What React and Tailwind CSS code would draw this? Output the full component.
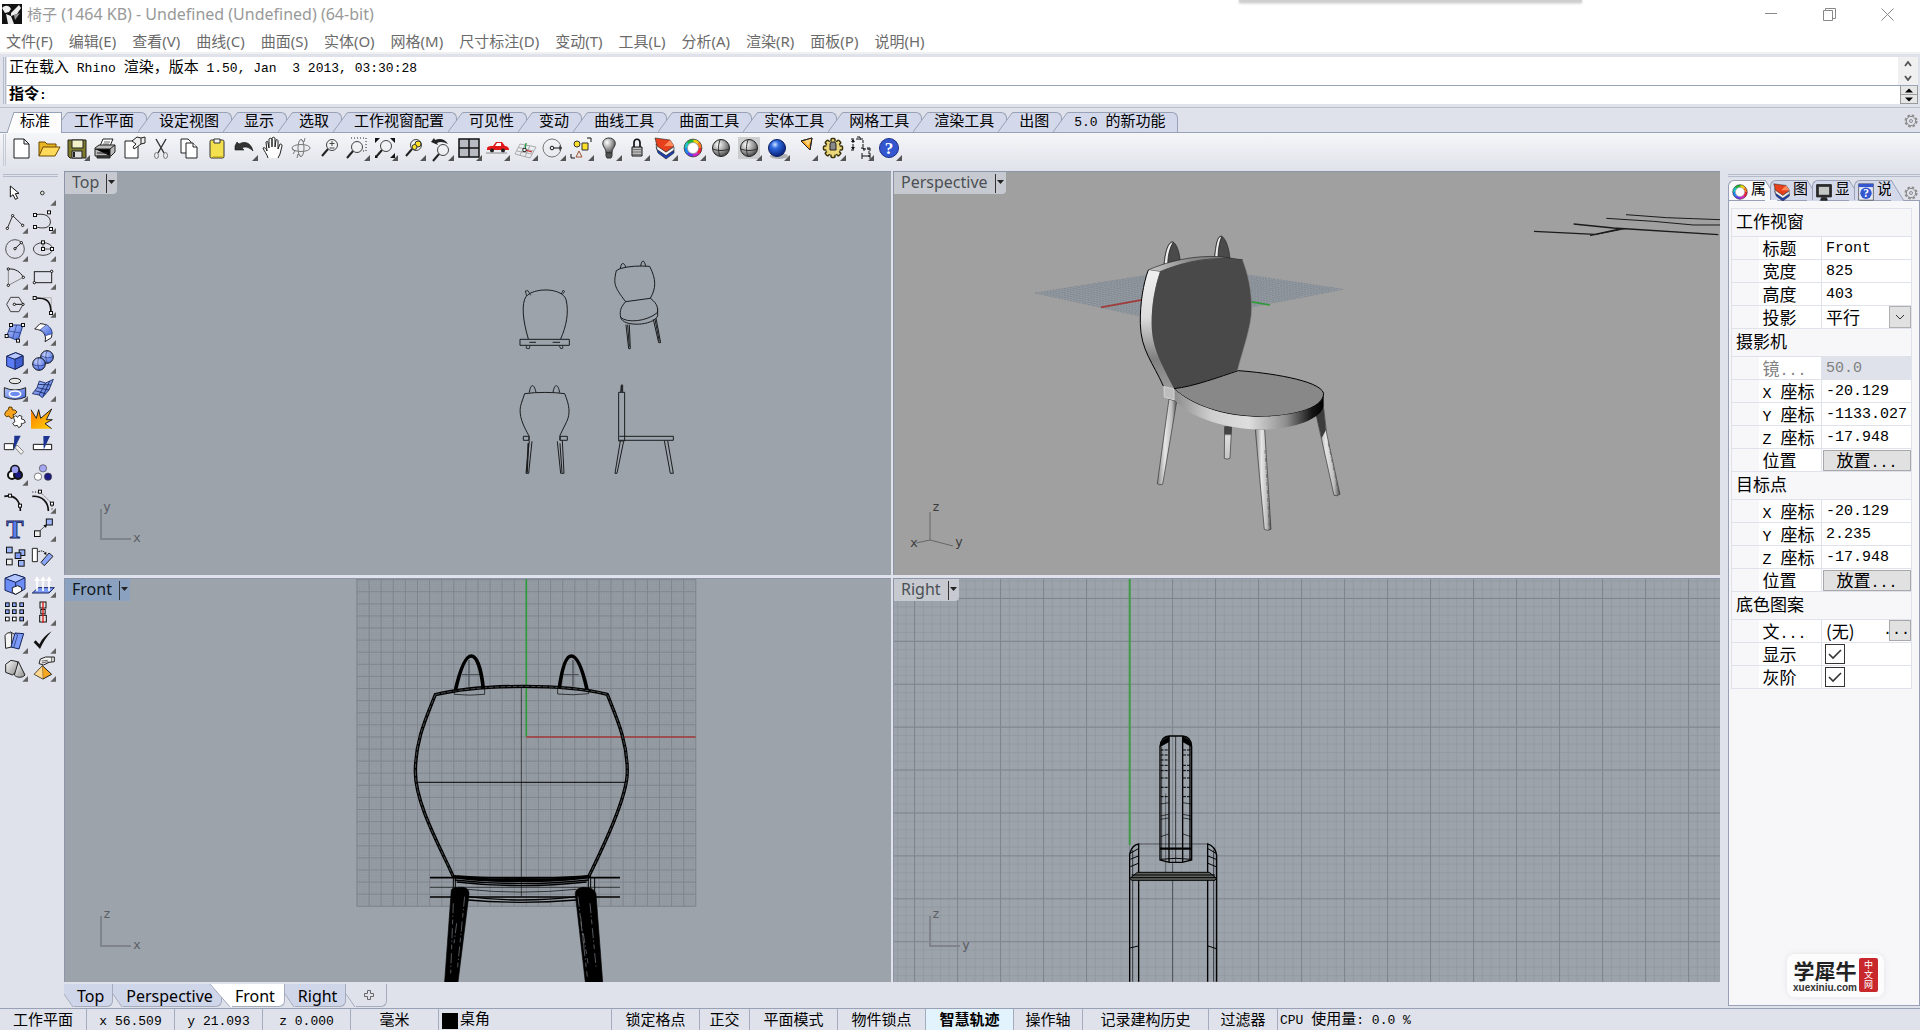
import React from "react";

const INK = "#1c1c1c";

/* ---------- text helpers ---------- */

function Mixed({ text, big }) {
  const parts = text.split(/([\x20-\x7e]+)/).filter(Boolean);
  return (
    <>
      {parts.map((p, i) =>
        /^[\x20-\x7e]+$/.test(p) ? (
          <span
            key={i}
            className={
              big
                ? "whitespace-pre font-['Liberation_Mono',monospace] text-[15px] leading-none"
                : "whitespace-pre font-['Liberation_Mono',monospace] text-[13px] leading-none"
            }
          >
            {p}
          </span>
        ) : (
          <span key={i}>{p}</span>
        )
      )}
    </>
  );
}

function Gear({ className }) {
  return (
    <svg className={className} width="14" height="14" viewBox="0 0 14 14" fill="none" stroke="#8c8c8c">
      <circle cx="7" cy="7" r="5.6" strokeWidth="1.8" strokeDasharray="2.6 1.8" />
      <circle cx="7" cy="7" r="4.6" strokeWidth="1" />
      <circle cx="7" cy="7" r="1.5" strokeWidth="1" />
    </svg>
  );
}

function SharedDefs() {
  return (
    <svg className="absolute h-0 w-0" aria-hidden="true">
      <defs>
        <linearGradient id="blue" x1="0" y1="0" x2="1" y2="1">
          <stop offset="0" stopColor="#b4c4fa" />
          <stop offset="1" stopColor="#4468dc" />
        </linearGradient>
        <linearGradient id="grey" x1="0" y1="0" x2="1" y2="1">
          <stop offset="0" stopColor="#ffffff" />
          <stop offset="1" stopColor="#8a8a8a" />
        </linearGradient>
        <linearGradient id="orange" x1="0" y1="0" x2="1" y2="1">
          <stop offset="0" stopColor="#ff7a00" />
          <stop offset="1" stopColor="#ffd200" />
        </linearGradient>
        <radialGradient id="ballBlue" cx="0.38" cy="0.3" r="0.75">
          <stop offset="0" stopColor="#cfe4ff" />
          <stop offset="0.3" stopColor="#2f6be0" />
          <stop offset="1" stopColor="#041a70" />
        </radialGradient>
        <radialGradient id="ballSoft" cx="0.38" cy="0.3" r="0.75">
          <stop offset="0" stopColor="#c8d4ff" />
          <stop offset="1" stopColor="#4468dc" />
        </radialGradient>
        <radialGradient id="ballGrey" cx="0.35" cy="0.3" r="0.8">
          <stop offset="0" stopColor="#ffffff" />
          <stop offset="0.6" stopColor="#8c8c8c" />
          <stop offset="1" stopColor="#333333" />
        </radialGradient>
      </defs>
    </svg>
  );
}

function ColorWheel({ cx, cy, r }) {
  const cols = ["#f3d400", "#ff7a1a", "#f01f3c", "#d426c8", "#5a3cf0", "#1e86f0", "#16c8c8", "#1fb83a"];
  return (
    <g fill="none" strokeWidth={r * 0.42}>
      {cols.map((c, i) => {
        const a = (i * Math.PI) / 4 - Math.PI / 2;
        const b = a + Math.PI / 4 + 0.06;
        return (
          <path
            key={c}
            stroke={c}
            d={`M${cx + r * Math.cos(a)} ${cy + r * Math.sin(a)}A${r} ${r} 0 0 1 ${cx + r * Math.cos(b)} ${cy + r * Math.sin(b)}`}
          />
        );
      })}
      <circle cx={cx} cy={cy} r={r * 1.22} stroke="#222" strokeWidth="0.7" />
      <circle cx={cx} cy={cy} r={r * 0.76} stroke="#555" strokeWidth="0.5" fill="#fff" />
    </g>
  );
}

const LayersShape = (
  <g stroke="#222" strokeWidth="0.6" strokeLinejoin="round">
    <path d="M5 13L15 21L23 16V19L15 25L7 19Z" fill="#1d3fae" />
    <path d="M5 10L15 18L23 13V16L15 21.500L6 15.500Z" fill="#f4f4f4" />
    <path d="M4 4L19 6L23 12L15 18L6 12Z" fill="#e8401c" />
    <path d="M19 6L13 12L23 12Z" fill="#ff8a5c" stroke="none" />
  </g>
);

/* ---------- standard toolbar icons, 28 x 28 ---------- */

const Glass = ({ x = 17, y = 11 }) => (
  <g>
    <circle cx={x} cy={y} r="5.5" fill="#f4f4f4" fillOpacity="0.5" stroke="#444" />
    <path d={`M${x - 4} ${y + 4}L${x - 10} ${y + 11}`} stroke="#222" strokeWidth="2" />
  </g>
);

const Tooth = ({ a }) => <rect x="12" y="4.500" width="4" height="19" rx="1" transform={`rotate(${a} 14 14)`} />;

const BAR = [
  ["新建", <path d="M7 5h10l5 5v14H7z M17 5v5h5" fill="#fff" stroke={INK} />],
  ["打开", <g stroke="#6b4a00"><path d="M4 22V8h6l2 2h9v4" fill="#e8b422" /><path d="M4 22l4-9h17l-5 9z" fill="#ffd95a" /></g>],
  ["保存", <g stroke="#222"><path d="M5 6h18v18H7l-2-2z" fill="#7d7a2c" /><path d="M9 6h11v8H9z" fill="#f4f1c8" /><path d="M9 17h10v7H9z" fill="#ddd" /><path d="M11 18v5" strokeWidth="2" /></g>, 1],
  ["打印", <g stroke="#222"><path d="M9 12l3-7h10l-3 7z" fill="#fff" /><path d="M13 8h6M12 10h6" strokeWidth="0.7" /><path d="M4 14l4-3h16v7l-4 4H4z" fill="#bbb" /><path d="M4 15h15v7M19 15l5-4M6 19h11" /><path d="M6 22h13v2H6z" fill="#444" /></g>],
  ["文件属性", <g stroke="#222"><path d="M6 7h13v17H6z" fill="#fff" /><path d="M13 7l5-4 4 1 4-1v6l-4 1-4 3-3 2-1-2 3-3z" fill="#eee" /><path d="M22 4v6" /></g>],
  ["剪切", <g fill="none" stroke="#333"><path d="M9 5l8 14M19 5l-8 14" strokeWidth="1.4" /><ellipse cx="9.500" cy="21.500" rx="2" ry="3" stroke="#777" /><ellipse cx="18.500" cy="21.500" rx="2" ry="3" stroke="#777" /></g>],
  ["复制", <g fill="#fff" stroke="#222"><path d="M6 5h7l3 3v11H6z" /><path d="M11 9h7l4 4v11H11z" /><path d="M18 9v4h4" /></g>],
  ["粘贴", <g stroke="#333"><rect x="7" y="6" width="14" height="18" rx="1.500" fill="#f3e04e" /><path d="M11 5h6v4h-6z" fill="#f4f4f4" /><path d="M10 23h10" stroke="#b09a10" /></g>],
  ["撤销", <path d="M4 12l2-4 2 2c5-3 12-2 14 7-4-4-8-5-11-3l2 2-9 0z" fill="#333" stroke="#111" strokeWidth="0.6" />, 1],
  ["平移", <path d="M9 24c-1-4-4-7-5-10 1-1 3 0 4 3l-1-9c1-1 2-1 2 1l1 5V5c1-1 2-1 3 0v8V4c1-1 2-1 3 0v9l1-7c1-1 2 0 2 1v8l2-5c1 0 2 0 2 2l-2 8-2 4" fill="#fff" stroke="#222" />],
  ["旋转视图", <g fill="none" stroke="#777"><ellipse cx="14" cy="14" rx="9" ry="3.500" /><ellipse cx="14" cy="14" rx="3" ry="8.500" /><path d="M17 8l-3-3M17 8l1-4M8 17l-3-2M8 17l-2 3M11 20l3 3M11 20l-1 4" /></g>],
  ["动态缩放", <g><Glass /><path d="M14.500 9.500h5M17 7v5M14.500 14h5" stroke="#444" fill="none" /></g>],
  ["框选缩放", <g><path d="M8 4h15v13h-4" fill="none" stroke="#222" strokeDasharray="1 2" /><Glass x={14} y={13} /></g>, 1],
  ["缩放至范围", <g><Glass x={15} y={12} /><path d="M4 4h5L4 9zM24 4v5l-5-5zM24 24h-5l5-5zM4 24v-3l3 3z" fill="#111" /></g>, 1],
  ["缩放选取物件", <g><Glass /><circle cx="19" cy="10" r="3" fill="#ffe12a" stroke="#333" /><circle cx="15.500" cy="13" r="2.500" fill="#ffe12a" stroke="#333" /></g>, 1],
  ["复原视图", <g><Glass x={16} y={16} /><path d="M4 8l3-4 1 2c5-2 10-1 13 4-4-2-8-3-11-1l1 2z" fill="#222" /></g>, 1],
  ["四个作业视窗", <path d="M4 5h20v18H4zM14 5v18M4 14h20" fill="#b8bcc2" stroke="#111" strokeWidth="1.500" />, 1],
  ["车", <g><path d="M4 15c0-3 3-3 6-3l3-4h6l3 4c2 0 4 1 4 4H4z" fill="#e01818" /><path d="M12 12l2-3h4v3z" fill="#fff" /><circle cx="9" cy="16.500" r="2" fill="#222" /><circle cx="20" cy="16.500" r="2" fill="#222" /><path d="M3 19h21" stroke="#888" /></g>, 1],
  ["设定工作平面", <g fill="none" stroke="#999" strokeWidth="0.8"><path d="M4 20l5-10 16 3-6 11zM6 17l15 3M7.500 13.500l15 3.500M9 21l5-10M14 22.500l5-11" /><path d="M14 16l1-7" stroke="#1a9a3a" strokeWidth="1.300" /><path d="M14 16l7 2" stroke="#d02020" strokeWidth="1.300" /><path d="M12 14.500h3v3h-3z" fill="#fff" stroke="#111" /></g>, 1],
  ["圆", <g fill="none" stroke="#777"><circle cx="13" cy="14" r="9" /><circle cx="13" cy="14" r="1.800" stroke="#111" /><path d="M15 14h8" stroke="#111" /><path d="M21 11.500v5" stroke="#111" /></g>, 1],
  ["物件捕捉", <g stroke="#333"><circle cx="10" cy="10" r="3" fill="#ffe12a" /><path d="M15 9h6v7h-6z" fill="#ffe12a" /><path d="M12 17l-3 6h6z" fill="none" stroke="#a0522d" /><path d="M20 4h4v4M4 20v4h4" fill="none" stroke="#111" /></g>, 1],
  ["灯光", <g stroke="#333"><path d="M14 4c-5 0-7 4-6 7 1 3 3 4 3 8h6c0-4 2-5 3-8 1-3-1-7-6-7z" fill="url(#ballGrey)" /><path d="M11 19h6v3l-1 2h-4l-1-2z" fill="#555" /></g>, 1],
  ["锁定", <g stroke="#111"><path d="M11 13V9c0-5 6-5 6 0v4" fill="none" strokeWidth="1.700" /><path d="M9 13h10v9H9z" fill="#bbb" /><path d="M10 15.500h8M10 18h8M10 20.500h8" stroke="#777" /></g>, 1],
  ["图层", LayersShape, 1],
  ["物件属性", <ColorWheel cx={14} cy={14} r={7.3} />, 1],
  ["着色模式", <g><circle cx="14" cy="14" r="8.500" fill="url(#ballGrey)" stroke="#222" /><path d="M6 15c5 2 11 2 16 0M13 6c-2 5-2 12 0 16" fill="none" stroke="#333" /></g>],
  ["着色全部", <g><rect x="3" y="3" width="22" height="22" fill="#b8b8b8" opacity="0.6" /><circle cx="14" cy="14" r="8.500" fill="url(#ballGrey)" stroke="#222" /><path d="M6 15c5 2 11 2 16 0M13 6c-2 5-2 12 0 16" fill="none" stroke="#333" /></g>, 1],
  ["渲染", <g><ellipse cx="16" cy="22" rx="9" ry="3" fill="#999" opacity="0.7" /><circle cx="14" cy="14" r="8.500" fill="url(#ballBlue)" stroke="#0a1c60" /></g>, 1],
  ["聚光灯", <g stroke="#222"><path d="M10 7l11-3-2 12z" fill="#f7a521" /><path d="M13 7l8-3-4 8z" fill="#ffd27a" stroke="none" /><path d="M10 7l11-3-2 12z" fill="none" /></g>, 1],
  ["选项", <g><g fill="#ecd87a" stroke="#3a3208" strokeWidth="1.500"><Tooth a={0} /><Tooth a={45} /><Tooth a={90} /><Tooth a={135} /></g><circle cx="14" cy="14" r="7" fill="#ecd87a" /><path d="M12 8h4l1 2v6h-6v-6z" fill="#888" stroke="#222" /></g>, 1],
  ["尺寸标注", <g fill="none" stroke="#111"><path d="M4 5h4M4 16h4M6 6v9M9 5h7v10M16 15h6v8" strokeDasharray="3 1" /><path d="M6 5l-2 3h4zM6 16l-2-3h4z" fill="#111" stroke="none" /><path d="M10 3h3v3M14 14h3v3M20 14h3v3" /><path d="M15 22h8M15 19v6M23 19v6" /></g>, 1],
  ["说明", <g><circle cx="14" cy="14" r="9.500" fill="#3457d0" stroke="#1c2f86" /><text x="14" y="20" textAnchor="middle" fill="#fff" fontFamily="Liberation Serif, serif" fontWeight="bold" fontSize="17">?</text></g>, 1],
];

/* ---------- side tool icons, 84 x 84 ---------- */

const Sq = ({ x, y, s = 9, f = "#fff" }) => (
  <rect x={x - s / 2} y={y - s / 2} width={s} height={s} fill={f} stroke="#111" strokeWidth="3" />
);
const Dot = ({ x, y }) => <circle cx={x} cy={y} r="3.5" fill="#fff" stroke="#111" strokeWidth="3" />;

const SIDE = [
  ["选取", <path d="M28 21V54L36 47L43 61L50 58L43 44L54 43Z" fill="#fff" stroke="#111" strokeWidth="3" />, 0],
  ["单点", <circle cx="40" cy="42" r="5.5" fill="#dfe8d8" stroke="#333" strokeWidth="3" />, 1],
  ["多重直线", <g><path d="M19 64L35 26L65 55" fill="none" stroke="#333" strokeWidth="3" /><Dot x={19} y={64} /><Dot x={35} y={26} /><Dot x={65} y={55} /></g>, 1],
  ["控制点曲线", <g><path d="M18 24C50 16 66 30 64 48C60 66 40 64 18 60" fill="none" stroke="#333" strokeWidth="3" /><Sq x={18} y={24} /><Sq x={60} y={16} /><Sq x={18} y={60} /><Sq x={66} y={66} /></g>, 1],
  ["圆", <g><circle cx="42" cy="42" r="28" fill="none" stroke="#555" strokeWidth="3" /><path d="M42 41L61 23" stroke="#111" strokeWidth="3" /><Dot x={42} y={41} /><Dot x={61} y={23} /></g>, 1],
  ["椭圆", <g><ellipse cx="42" cy="42" rx="29" ry="19" fill="none" stroke="#444" strokeWidth="3" /><path d="M42 22V42H69" fill="none" stroke="#111" strokeWidth="2" /><Sq x={42} y={22} /><Sq x={42} y={42} /><Sq x={69} y={42} /></g>, 1],
  ["圆弧", <g fill="none" strokeWidth="3"><path d="M22 18V67L67 43" stroke="#888" /><path d="M22 18C42 16 58 26 67 43" stroke="#222" /><Dot x={22} y={18} /><Dot x={67} y={43} /><Dot x={22} y={67} /></g>, 1],
  ["矩形", <g><rect x="16" y="26" width="52" height="33" fill="none" stroke="#222" strokeWidth="3" /><Dot x={68} y={25} /><Dot x={16} y={59} /></g>, 1],
  ["多边形", <g><path d="M17 40L29 19H54L66 40L54 62H29Z" fill="none" stroke="#444" strokeWidth="3" /><path d="M40 40H65" stroke="#111" strokeWidth="3" /><Dot x={40} y={40} /><Dot x={66} y={40} /></g>, 1],
  ["曲线圆角", <g fill="none"><path d="M40 20H67V50" stroke="#999" strokeWidth="2" /><path d="M17 21C52 20 66 28 66 66" stroke="#111" strokeWidth="5" /><Sq x={17} y={21} /><Sq x={66} y={66} /></g>, 1],
  ["角点曲面", <g><path d="M30 18H66L51 65L17 51Z" fill="url(#blue)" stroke="#223a88" strokeWidth="3" /><path d="M47 18L35 58M24 36L59 42" stroke="#223a88" strokeWidth="2" /><Sq x={30} y={18} /><Sq x={66} y={18} /><Sq x={51} y={65} /><Sq x={17} y={51} /></g>, 1],
  ["放样曲面", <g stroke="#222" strokeWidth="3"><path d="M17 30L33 14C60 14 74 34 67 56L48 68C54 48 42 32 17 30Z" fill="#fff" /><path d="M33 33L53 17C64 24 70 34 69 44L49 50C48 42 42 36 33 33Z" fill="url(#blue)" stroke="#223a88" strokeWidth="2" /></g>, 1],
  ["立方体", <g stroke="#16245c" strokeWidth="3" strokeLinejoin="round"><path d="M17 28L44 17L66 26V55L42 67L17 57Z" fill="#5a7cf4" /><path d="M17 28L44 17L66 26L42 37Z" fill="#b8c8ff" /><path d="M42 37L66 26V55L42 67Z" fill="#3f5fd0" /></g>, 1],
  ["布尔运算联集", <g stroke="#111" strokeWidth="3"><circle cx="54" cy="30" r="19" fill="url(#ballSoft)" /><circle cx="30" cy="51" r="19" fill="url(#ballSoft)" /><path d="M36 26C50 34 62 34 73 28M55 11C48 24 50 38 56 49M12 52C24 58 36 58 48 52M30 32C24 44 26 58 32 70" fill="none" stroke="#1c2f76" strokeWidth="2" /></g>, 1],
  ["投影曲线", <g stroke="#222" strokeWidth="3"><ellipse cx="42" cy="18" rx="17" ry="8" fill="#e8e8e8" /><path d="M10 38Q42 52 74 38V66Q42 80 10 66Z" fill="url(#blue)" /><ellipse cx="42" cy="57" rx="17" ry="9" fill="#6d8cf0" stroke="#fff" strokeWidth="5" /></g>, 1],
  ["网格", <g stroke="#16245c" strokeWidth="2.5"><path d="M31 18L50 24L73 13L60 45L40 68L30 60L10 56L24 38Z" fill="url(#blue)" /><path d="M24 38L60 45M18 47L50 56M50 24L30 60M62 18L42 64M27 28L66 30" fill="none" /></g>, 1],
  ["组合", <g strokeWidth="3"><path d="M14 26l8-6 2-8 9 1 1 8 8 0 6 6-6 6-6 2 2 8-8 4-6-8-8 2-5-6z" fill="#f7a521" stroke="#5c3a00" /><path d="M38 44l6-6 6 5 4-6 9 3-2 8 8 2 4 8-8 4-4-1 0 8-8 5-4-7-8 2-6-8 7-5z" fill="#fff" stroke="#333" /></g>, 0],
  ["炸开", <g><path d="M6 20L22 46L29 20L35 46L68 18L52 50H70L48 62L68 77H6Z" fill="url(#orange)" /><path d="M6 20L22 46L29 20L35 46L68 18L52 50H70L48 62L68 77" fill="none" stroke="#222" strokeWidth="3" /></g>, 0],
  ["修剪", <g stroke="#222" strokeWidth="3"><path d="M10 38H38V56H10Z" fill="#fff" /><path d="M42 50L48 42L68 62L60 70Z" fill="#eee" stroke="#888" /><path d="M40 14H59L38 58Z" fill="#1d3590" stroke="none" /></g>, 0],
  ["分割", <g stroke="#111" strokeWidth="3"><path d="M13 40H68V56H13Z" fill="#fff" /><path d="M43 15H63L44 56Z" fill="#1d3590" stroke="none" /></g>, 0],
  ["群组", <g stroke="#111" strokeWidth="6"><circle cx="42" cy="32" r="12" fill="#9a9cf0" /><circle cx="33" cy="48" r="12" fill="#fff" /><circle cx="51" cy="48" r="12" fill="#1c1a80" /><circle cx="42" cy="32" r="10" fill="#9a9cf0" stroke="none" /></g>, 1],
  ["解散群组", <g stroke="#444" strokeWidth="2"><circle cx="42" cy="28" r="11" fill="#a4a6f2" /><circle cx="27" cy="53" r="11" fill="#fff" /><circle cx="57" cy="53" r="11" fill="#1c1a80" /></g>, 0],
  ["编辑点", <g><path d="M10 28C40 22 58 40 58 72" fill="none" stroke="#111" strokeWidth="5" /><Sq x={27} y={26} /><Sq x={57} y={56} /></g>, 0],
  ["控制点", <g><path d="M10 28C40 26 58 46 58 72" fill="none" stroke="#111" strokeWidth="5" /><path d="M10 15H34L69 50V72" fill="none" stroke="#111" strokeWidth="3" strokeDasharray="3 5" /><Sq x={33} y={14} /><Sq x={69} y={50} /></g>, 1],
  ["文字", <text x="42" y="68" textAnchor="middle" fontFamily="Liberation Serif, serif" fontWeight="bold" fontSize="78" fill="#5c80ea" stroke="#16245c" strokeWidth="2.500">T</text>, 0],
  ["移动", <g><path d="M34 46L52 30" stroke="#111" strokeWidth="3" strokeDasharray="5 3" /><path d="M54 28L43 31L51 39Z" fill="#111" /><Sq x={25} y={56} s={17} f="#eee" /><Sq x={61} y={21} s={18} f="#9cb4fa" /></g>, 1],
  ["复制", <g><Sq x={25} y={21} s={17} f="#9cb4fa" /><Sq x={63} y={29} s={17} f="#9cb4fa" /><Sq x={51} y={38} s={17} f="#7c9af4" /><Sq x={25} y={57} s={17} f="#eee" /><Sq x={61} y={61} s={17} f="#9cb4fa" /></g>, 0],
  ["旋转", <g stroke="#222" strokeWidth="3"><path d="M10 16H25V56H10Z" fill="#fff" /><path d="M28 26C38 22 46 24 50 32" fill="none" strokeDasharray="5 2" /><path d="M52 36l-8-4 8-6z" fill="#111" stroke="none" /><path d="M36 58L60 30L72 40L46 68Z" fill="#8aa6f8" /></g>, 0],
  ["实体编辑", <g stroke="#16245c" strokeWidth="3" strokeLinejoin="round"><path d="M12 22L42 10L72 20V54L44 70L12 58Z" fill="#6c8cf6" /><path d="M12 22L42 10L72 20L44 34Z" fill="#b4c6ff" /><path d="M34 50L50 44L62 50V60L44 70L34 64Z" fill="#fff" stroke="#222" /><path d="M44 34V48" /></g>, 1],
  ["挤出", <g><path d="M10 66L28 50H76L60 66Z" fill="#7c9af8" stroke="#16245c" strokeWidth="3" /><path d="M24 60V26M42 60V26M60 60V26" stroke="#fff" strokeWidth="5" /><path d="M15 30L24 16L33 30ZM33 30L42 16L51 30ZM51 30L60 16L69 30Z" fill="#fff" /></g>, 1],
  ["矩形阵列", <g>{[17, 38, 60].map((y) => [19, 40, 62].map((x) => <Sq key={x + "-" + y} x={x} y={y} s={11} f={y > 50 && x < 50 ? "#fff" : "#8aa6f8"} />))}</g>, 1],
  ["对齐", <g><Sq x={42} y={18} s={18} f="#e4e4e4" /><Sq x={42} y={38} s={13} f="#e4e4e4" /><Sq x={42} y={59} s={20} f="#e4e4e4" /><path d="M42 8V72" stroke="#e01818" strokeWidth="5" strokeOpacity="0.8" /></g>, 1],
  ["分析", <g stroke="#222" strokeWidth="3"><path d="M12 26C16 18 26 14 32 20V60L14 64Z" fill="#f4f4f4" /><path d="M28 14L40 22" /><path d="M42 18L68 20L54 66L30 60Z" fill="#7c9af8" stroke="#16245c" /><path d="M42 18L50 24L38 62" fill="none" stroke="#16245c" strokeWidth="2" /></g>, 1],
  ["检查", <path d="M14 46L20 40L31 52C40 34 52 22 68 13C52 30 42 46 33 66Z" fill="#111" />, 1],
  ["可见性", <g stroke="#222" strokeWidth="3"><path d="M14 28L30 16L50 20V48L34 60L14 52Z" fill="url(#grey)" /><path d="M52 20L72 60C64 70 46 68 40 60Z" fill="url(#grey)" /></g>, 1],
  ["着色", <g stroke="#222" strokeWidth="3"><path d="M40 32L68 58L42 72L16 58Z" fill="#f5a623" /><path d="M40 32L42 72L16 58Z" fill="#ffd890" strokeWidth="1" /><path d="M34 12L50 6H76V20L60 22L44 30L30 26Z" fill="#eee" /><path d="M38 18L56 16M38 24L58 20M68 6V20" strokeWidth="2" /></g>, 1],
];

/* ---------- viewport drawings ---------- */

const range = (n) => Array.from({ length: n }, (_, i) => i);

function AxisMark({ x, y, up, side }) {
  return (
    <g fontFamily="DejaVu Sans Mono, monospace" fontSize="13" fill="#5a5e64">
      <path d={`M${x} ${y - 30}V${y}H${x + 30}`} fill="none" stroke="#80838a" strokeWidth="2" />
      <text x={x + 2} y={y - 28}>{up}</text>
      <text x={x + 32} y={y + 3}>{side}</text>
    </g>
  );
}

function TopScene() {
  return (
    <g transform="translate(-65 -172)">
      <AxisMark x={101} y={539} up="y" side="x" />
      <g transform="translate(480 230) scale(.3333)" fill="none" stroke="#1a1c1e" strokeWidth="3">
        <path d="M145 327C128 270 124 220 138 200C160 172 245 172 258 208C268 250 258 290 242 327" />
        <path d="M120 328H268V346H120ZM148 337H168M218 337H240" />
        <path d="M140 198L136 183L144 182L152 196M244 192L249 181L254 184L248 192M139 347V355L148 356L150 347M238 347L242 356L248 355V347" strokeWidth="2.500" />
        <path d="M420 116L409 122C400 160 402 170 437 215L511 205C528 175 530 150 509 109C480 107 445 108 420 116" />
        <path d="M421 115C424 98 430 94 438 112M482 108C486 88 492 88 497 108" />
        <path d="M437 215C418 235 420 250 422 262C440 280 500 275 532 248C536 228 525 215 511 205M422 262C428 292 520 288 533 258V236" />
        <path d="M438 284L446 356H451L448 284M443 284L448 350M520 268L536 338H542L528 264M525 268L538 334" />
        <path d="M146 616C120 570 116 545 124 520L134 491C170 486 220 486 254 491C268 525 272 550 260 575L240 616" />
        <path d="M148 488C152 460 162 460 168 487M219 487C224 460 234 460 239 488" />
        <path d="M130 619H147V631H130ZM240 619H262V631H240ZM240 616V631M147 616V631" />
        <path d="M148 632L138 730H146L156 634" /><path d="M145 640L141 728" strokeWidth="5" />
        <path d="M232 634L242 730H252L247 632M240 640L246 728" strokeWidth="3" />
        <path d="M416 487H434V633H416ZM422 487L424 465H428V487M425 468V485" />
        <path d="M418 619H580V631H418" />
        <path d="M421 633L405 730H411L431 634M553 632L571 730H580L563 632" />
      </g>
    </g>
  );
}

function lerp(a, b, t) {
  return [a[0] + (b[0] - a[0]) * t, a[1] + (b[1] - a[1]) * t];
}

function PerspectiveScene() {
  const L = [45, 219], T = [531, 142], R = [970, 208], B = [452, 308];
  const lines = range(29).flatMap((i) => {
    const t = i / 28;
    return [[lerp(L, T, t), lerp(B, R, t)], [lerp(L, B, t), lerp(T, R, t)]];
  });
  return (
    <g transform="translate(-894 -172)">
      <defs>
        <linearGradient id="side" x1="0" y1="0" x2="0" y2="1">
          <stop offset="0" stopColor="#f0f0f0" /><stop offset="0.4" stopColor="#dcdcdc" /><stop offset="0.75" stopColor="#808080" /><stop offset="1" stopColor="#9a9a9a" />
        </linearGradient>
        <linearGradient id="seat" x1="0" y1="0" x2="1" y2="0">
          <stop offset="0" stopColor="#8c8c8c" /><stop offset="0.25" stopColor="#cfcfcf" /><stop offset="0.5" stopColor="#dedede" /><stop offset="0.75" stopColor="#8e8e8e" /><stop offset="0.92" stopColor="#151515" /><stop offset="1" stopColor="#000" />
        </linearGradient>
        <linearGradient id="leg" x1="0" y1="0" x2="1" y2="0">
          <stop offset="0" stopColor="#8a8a8a" /><stop offset="0.4" stopColor="#e6e6e6" /><stop offset="0.75" stopColor="#bdbdbd" /><stop offset="1" stopColor="#555" />
        </linearGradient>
        <linearGradient id="rim" x1="0" y1="0" x2="1" y2="0">
          <stop offset="0" stopColor="#c8c8c8" /><stop offset="0.45" stopColor="#8a8a8a" /><stop offset="1" stopColor="#707070" />
        </linearGradient>
        <linearGradient id="legDark" x1="0" y1="0" x2="0" y2="1">
          <stop offset="0" stopColor="#444" /><stop offset="0.22" stopColor="#444" /><stop offset="0.28" stopColor="#dcdcdc" /><stop offset="1" stopColor="#c4c4c4" />
        </linearGradient>
      </defs>
      <g transform="translate(1020 220) scale(.3333)" strokeLinejoin="round">
        <path d={`M${L}L${T}L${R}L${B}Z`} fill="#949ba3" />
        <g stroke="#7b838b" strokeWidth="2" strokeDasharray="5 4">
          {lines.map(([a, b], i) => (
            <path key={i} d={`M${a}L${b}`} />
          ))}
        </g>
        <path d="M243 262L370 239" stroke="#a03c3c" strokeWidth="5" />
        <path d="M690 245L750 255" stroke="#2f9a35" strokeWidth="5" />
        <path d="M614 620H635L630 715Q621 720 613 715Z" fill="url(#legDark)" stroke="#333" strokeWidth="2" />
        <path d="M447 537L470 545L428 793Q419 797 412 791Z" fill="url(#leg)" stroke="#333" strokeWidth="2" />
        <path d="M706 628H734L753 928Q742 934 733 928Z" fill="url(#leg)" stroke="#333" strokeWidth="2" />
        <path d="M889 586L911 565L920 640L960 823Q950 830 942 826Z" fill="url(#leg)" stroke="#333" strokeWidth="2" />
        <path d="M889 586L911 565L918 630L905 655Z" fill="#3c3c3c" />
        <path d="M735 690L748 920M925 670L955 815" stroke="#555" strokeWidth="2" strokeDasharray="12 5 3 4" />
        <path d="M432 140C435 95 445 65 458 66C470 70 478 95 481 124Z" fill="#4a4a4a" stroke="#222" strokeWidth="2" />
        <path d="M432 140C435 95 445 64 460 66C448 85 443 110 443 138Z" fill="#efefef" stroke="#111" strokeWidth="2" />
        <path d="M584 112C588 75 592 48 604 48C618 55 627 85 630 115Z" fill="#4a4a4a" stroke="#222" strokeWidth="2" />
        <path d="M584 112C588 75 592 47 605 49C597 70 594 92 594 114Z" fill="#efefef" stroke="#111" strokeWidth="2" />
        <path d="M385 150C440 125 520 105 600 110L668 120C580 108 500 122 420 155Z" fill="url(#rim)" stroke="#222" strokeWidth="2" />
        <path d="M385 150L420 155C405 200 395 250 395 310C395 390 430 440 462 505L430 498C400 430 362 390 361 310C360 250 370 190 385 150Z" fill="url(#side)" />
        <path d="M385 150C370 190 360 250 361 310C362 390 400 430 430 498" fill="none" stroke="#000" strokeWidth="3" />
        <path d="M420 155C500 122 580 110 668 120C685 165 695 210 695 265C695 320 668 390 653 450C600 470 520 500 462 506C430 440 395 390 395 310C395 250 405 200 420 155Z" fill="#494949" />
        <path d="M668 120C685 165 695 210 695 265C695 320 668 390 653 450" fill="none" stroke="#8a8a8a" strokeWidth="2" />
        <path d="M462 506C520 500 600 470 655 452C740 458 900 480 911 520C911 570 800 590 720 590C620 590 520 560 462 506Z" fill="#888" stroke="#000" strokeWidth="3" />
        <path d="M462 506C520 560 620 590 720 590C800 590 911 570 911 520L911 562C895 605 800 630 720 629C600 625 500 585 466 542Z" fill="url(#seat)" />
        <path d="M432 500L462 507V540L433 531Z" fill="#bdbdbd" stroke="#e4e4e4" strokeWidth="2" />
      </g>
      <g transform="translate(1480 190) scale(.3333)" fill="none" stroke="#1a1a1a" strokeWidth="4">
        <path d="M162 124L345 133L420 117M281 102L400 114L715 134" />
        <path d="M330 137L440 115M379 85L520 94L640 105H720M438 74L560 83L640 86L720 89" strokeWidth="3" />
      </g>
      <g fontFamily="DejaVu Sans Mono, monospace" fontSize="13" fill="#3c3c3c">
        <path d="M930 512V540M930 540L916 543M930 540L953 546" fill="none" stroke="#666" />
        <text x="932" y="511">z</text>
        <text x="910" y="547">x</text>
        <text x="955" y="546">y</text>
      </g>
    </g>
  );
}

function FrontScene() {
  return (
    <g transform="translate(-65 -579)">
      <g transform="translate(340 570) scale(.3333)" fill="none">
        <rect x="50" y="27" width="1017" height="982" fill="#979ea5" />
        <g stroke="#8b929a" strokeWidth="1">
          {range(141).map((i) => <path key={"v" + i} d={`M${51 + i * 7.26} 27V1009`} />)}
          {range(136).map((i) => <path key={"h" + i} d={`M50 ${1009 - i * 7.26}H1067`} />)}
        </g>
        <g stroke="#7f858e" strokeWidth="3">
          {range(29).map((i) => <path key={"v" + i} d={`M${51 + i * 36.3} 27V1009`} />)}
          {range(28).map((i) => <path key={"h" + i} d={`M50 ${1009 - i * 36.3}H1067`} />)}
        </g>
        <path d="M559 27V500" stroke="#2f9a3a" strokeWidth="5" />
        <path d="M559 501H1067" stroke="#a03a3a" strokeWidth="5" />
        <g stroke="#000">
          <path d="M544 352V980" strokeWidth="3" strokeOpacity="0.6" />
          <path d="M228 637H860" strokeWidth="3" />
          <path d="M286 374C420 342 670 340 802 373C828 440 862 510 862 605C862 680 790 830 746 920C640 936 440 936 340 920C300 830 226 700 226 605C226 510 260 440 286 374Z" strokeWidth="10" strokeLinejoin="round" />
          <path d="M286 374C420 342 670 340 802 373C828 440 862 510 862 605C862 680 790 830 746 920" stroke="#6a7074" strokeWidth="2" strokeDasharray="14 4" />
          <path d="M226 605C226 700 300 830 340 920M286 374C260 440 226 510 226 605" stroke="#6a7074" strokeWidth="2" strokeDasharray="14 4" />
          <path d="M346 362C360 300 376 258 394 258C412 258 424 300 430 356M658 354C666 296 678 258 694 258C712 258 728 300 741 358" strokeWidth="11" />
          <path d="M387 270V350M366 314H418M699 270V350M664 314H716" strokeWidth="4" strokeOpacity="0.45" />
          <path d="M343 362V373Q390 378 434 373V356M653 356V372Q700 377 746 371V358" strokeWidth="2" />
          <path d="M270 923H840M270 981H840" strokeWidth="5" />
          <path d="M270 952H840" strokeWidth="2" />
          <path d="M344 930Q540 952 746 930M350 918Q540 932 744 918M350 936Q540 958 740 936" strokeWidth="4" />
          <path d="M380 958Q540 975 710 958" strokeWidth="2" />
          <path d="M384 980Q540 1000 710 980M384 990Q540 1004 710 990" strokeWidth="4" />
          <path d="M340 915V960M346 915V960M745 915V960M752 918V960M764 923V965" strokeWidth="3" />
          <path d="M334 960Q338 950 370 952Q388 956 387 972L354 1236H314Z M706 972Q706 954 730 952Q764 952 768 972L788 1236H736Z" fill="#000" strokeWidth="2" />
          <path d="M340 1000L332 1210M350 1060L342 1120M374 980L352 1200M714 980L742 1220M722 1040L732 1130M730 1090L744 1180M750 1000L768 1190" stroke="#7d848b" strokeWidth="2" strokeDasharray="30 7 4 8 14 12" />
        </g>
      </g>
      <AxisMark x={101} y={946} up="z" side="x" />
    </g>
  );
}

function RightScene() {
  return (
    <g transform="translate(-894 -579)">
      <g stroke="#939ba2" strokeWidth="1">
        {range(98).map((i) => <path key={"v" + i} d={`M${889 + i * 8.6} 579V983`} />)}
        {range(48).map((i) => <path key={"h" + i} d={`M893 ${581 + i * 8.58}H1724`} />)}
      </g>
      <g stroke="#80868f" strokeWidth="1">
        {range(19).map((i) => <path key={"v" + i} d={`M${914.5 + i * 43} 579V983`} />)}
        {range(10).map((i) => <path key={"h" + i} d={`M893 ${598.5 + i * 42.9}H1724`} />)}
      </g>
      <path d="M1129.700 579V845" stroke="#3f9a45" strokeWidth="2" />
      <g transform="translate(1080 700) scale(.3333)" fill="none" stroke="#000">
        <path d="M278 490V845M257 280V540" strokeWidth="2" strokeOpacity="0.6" />
        <path d="M240 140Q244 108 268 108H308Q334 110 335 140V480L306 487H268L240 480Z" strokeWidth="4" />
        <path d="M267 108V486M308 108V486M330 130V480" strokeWidth="4" />
        <path d="M245 140V480M287 108V486" strokeWidth="2" />
        <path d="M240 140Q246 114 267 110V125ZM308 110Q332 114 335 140L308 125Z" fill="#000" strokeWidth="2" />
        <path d="M242 150H266M242 165H266M242 180H266M242 196H266M242 212H266M242 234H266M242 262H266M242 290H266M309 150H333M309 165H333M309 196H333M309 212H333M309 234H333M309 262H333M309 290H333" strokeWidth="3" strokeDasharray="9 3" />
        <path d="M242 312L266 308M242 348L266 343M242 358L266 354M242 410L266 402M309 308L333 312M309 343L333 348M309 354L333 358M309 402L333 410" strokeWidth="2" />
        <path d="M240 446H335" strokeWidth="7" />
        <path d="M242 478Q288 472 334 478" strokeWidth="3" />
        <path d="M176 432H383" strokeWidth="1.500" />
        <path d="M149 845V462Q156 434 176 432V845M383 845V432Q406 440 410 465V845" strokeWidth="4" />
        <path d="M158 450V845M401 450V845" strokeWidth="2" />
        <path d="M151 460L175 446M151 478L175 468M151 500L175 490M384 446L408 460M384 468L408 478M384 490L408 500M150 744L175 738M384 738L409 746" strokeWidth="3" />
        <path d="M150 535L172 517H388L409 535L405 541H155Z" fill="#5d625f" strokeWidth="3" />
        <path d="M155 525H405M152 533H408" strokeWidth="3" />
      </g>
      <AxisMark x={930} y={946} up="z" side="y" />
    </g>
  );
}

function Viewport({ title, active, tone, children }) {
  return (
    <section
      aria-label={title}
      className={
        tone === "grey"
          ? "relative min-w-0 overflow-hidden border-l border-t border-[#8d95a8] bg-[#a0a0a0]"
          : "relative min-w-0 overflow-hidden border-l border-t border-[#8d95a8] bg-[#9ca3ab]"
      }
    >
      <svg className="absolute inset-0 h-full w-full">{children}</svg>
      <button
        className={
          active
            ? "relative flex h-[22px] items-center bg-[#8aa2c0] pb-0.5 pl-[7px] text-[16px] leading-5 text-[#101820]"
            : "relative flex h-[22px] items-center rounded-br-sm bg-[#c6cad0] pb-0.5 pl-[7px] text-[16px] leading-5 text-[#4c4f54]"
        }
      >
        <span className="pr-[7px]">{title}</span>
        <span className="mt-0.5 h-[19px] border-l border-[#333]" />
        <svg width="10" height="6" viewBox="0 0 10 6"><path d="M1 1h7L4.500 5z" fill="#222" /></svg>
      </button>
    </section>
  );
}

/* ---------- page parts ---------- */

const MENUS = ["文件(F)", "编辑(E)", "查看(V)", "曲线(C)", "曲面(S)", "实体(O)", "网格(M)", "尺寸标注(D)", "变动(T)", "工具(L)", "分析(A)", "渲染(R)", "面板(P)", "说明(H)"];
const TABS = ["标准", "工作平面", "设定视图", "显示", "选取", "工作视窗配置", "可见性", "变动", "曲线工具", "曲面工具", "实体工具", "网格工具", "渲染工具", "出图", "5.0 的新功能"];

function ToolTab({ label, first }) {
  return (
    <button className={first ? "relative z-10 flex h-[21px]" : "flex h-5"}>
      {first ? (
        <svg width="7" height="21" viewBox="0 0 7 21"><path d="M0 21L7 0V21Z" fill="#fcfcfd" /><path d="M0 21L7 0" stroke="#98a1b5" /></svg>
      ) : (
        <svg className="-ml-[9px]" width="16" height="20" viewBox="0 0 16 20"><path d="M0 20L15 0H16V20Z" fill="#d3d8ea" /><path d="M0 20L14 1Q15 0.500 16 0.500" fill="none" stroke="#98a1b5" /></svg>
      )}
      <span
        className={
          first
            ? "h-full whitespace-nowrap border-r border-t border-[#98a1b5] bg-[#fcfcfd] pl-1.5 pr-[11px] text-[15px] leading-[13px]"
            : "h-full whitespace-nowrap rounded-tr-md border-r border-t border-[#98a1b5] bg-[#d3d8ea] pl-[5px] pr-3 text-[15px] leading-[13px]"
        }
      >
        <Mixed text={label} />
      </span>
    </button>
  );
}

function Field({ label, id, children, muted }) {
  return (
    <tr className="h-[23px] border-b border-[#dfe2ea]">
      <td className="bg-[#f7f7fa]" />
      <th scope="row" className="border-r border-[#dfe2ea] bg-white p-0 pl-1 text-left font-normal">
        <label htmlFor={id} className={muted ? "block h-[22px] whitespace-nowrap leading-[21px] text-[#808080]" : "block h-[22px] whitespace-nowrap leading-[21px]"}>
          <Mixed text={label} big />
        </label>
      </th>
      <td className={muted ? "bg-[#dfe2ea] p-0" : "bg-white p-0"}>{children}</td>
    </tr>
  );
}

function GroupRow({ children }) {
  return (
    <tr className="h-7 border-b border-[#dfe2ea]">
      <th colSpan="3" className="bg-[#f7f7fa] p-0 pb-[3px] pl-1 text-left font-normal leading-6">{children}</th>
    </tr>
  );
}

function Value({ id, value, disabled }) {
  return (
    <input
      id={id}
      defaultValue={value}
      disabled={disabled}
      className="block h-[22px] w-full bg-transparent pl-1 pt-[3px] font-['Liberation_Mono',monospace] text-[15px] disabled:text-[#808080]"
    />
  );
}

function Place({ id }) {
  return (
    <button id={id} className="ml-px block h-[21px] w-[88px] border border-[#a8a8a8] bg-[#e1e1e1] leading-[17px]">
      <Mixed text="放置..." big />
    </button>
  );
}

function Tick({ id }) {
  return (
    <span className="relative ml-[3px] block h-5 w-5">
      <input id={id} type="checkbox" defaultChecked className="peer block h-5 w-5 appearance-none border border-[#333] bg-white" />
      <svg className="pointer-events-none absolute inset-0 hidden peer-checked:block" width="20" height="20" viewBox="0 0 20 20"><path d="M4 10l4 4 8-8" fill="none" stroke="#333" strokeWidth="1.600" /></svg>
    </span>
  );
}

function Properties() {
  return (
    <table className="w-[181px] table-fixed border-collapse border border-[#dfe2ea] text-[17px]">
      <colgroup><col className="w-[27px]" /><col className="w-[63px]" /><col /></colgroup>
      <tbody>
        <GroupRow>工作视窗</GroupRow>
        <Field label="标题" id="title"><Value id="title" value="Front" /></Field>
        <Field label="宽度" id="width"><Value id="width" value="825" /></Field>
        <Field label="高度" id="height"><Value id="height" value="403" /></Field>
        <Field label="投影" id="proj">
          <span className="relative block h-[22px]">
            <select id="proj" className="block h-[21px] w-full appearance-none bg-transparent pl-1 text-[17px] leading-[21px]"><option>平行</option></select>
            <span className="pointer-events-none absolute right-0 top-0 flex h-[22px] w-[22px] items-center justify-center border border-[#b0b0b0] bg-[#e1e1e1]">
              <svg width="10" height="6" viewBox="0 0 10 6"><path d="M1 1l4 4 4-4" fill="none" stroke="#333" /></svg>
            </span>
          </span>
        </Field>
        <GroupRow>摄影机</GroupRow>
        <Field label="镜..." id="lens" muted><Value id="lens" value="50.0" disabled /></Field>
        <Field label="X 座标" id="cx"><Value id="cx" value="-20.129" /></Field>
        <Field label="Y 座标" id="cy"><Value id="cy" value="-1133.027" /></Field>
        <Field label="Z 座标" id="cz"><Value id="cz" value="-17.948" /></Field>
        <Field label="位置" id="cp"><Place id="cp" /></Field>
        <GroupRow>目标点</GroupRow>
        <Field label="X 座标" id="tx"><Value id="tx" value="-20.129" /></Field>
        <Field label="Y 座标" id="ty"><Value id="ty" value="2.235" /></Field>
        <Field label="Z 座标" id="tz"><Value id="tz" value="-17.948" /></Field>
        <Field label="位置" id="tp"><Place id="tp" /></Field>
        <GroupRow>底色图案</GroupRow>
        <Field label="文..." id="file">
          <span className="flex h-[22px] justify-between pl-1">
            <input id="file" defaultValue="(无)" className="h-[21px] w-12 bg-transparent" />
            <button aria-label="浏览" className="flex h-[21px] w-[22px] justify-end border border-[#a8a8a8] bg-[#e1e1e1] leading-[19px]"><span className="font-['Liberation_Mono',monospace] text-[15px]">...</span></button>
          </span>
        </Field>
        <Field label="显示" id="show"><Tick id="show" /></Field>
        <Field label="灰阶" id="gray"><Tick id="gray" /></Field>
      </tbody>
    </table>
  );
}

function PanelTab({ label, active, children }) {
  return (
    <button className="flex h-full w-[42px] shrink-0">
      <span
        className={
          active
            ? "flex h-full shrink-0 rounded-tl-md border-l border-t border-[#98a1b5] bg-[#fafafc] pl-0.5 leading-[14px]"
            : "flex h-full shrink-0 rounded-tl-md border-l border-t border-[#98a1b5] bg-[#d3d8ea] pl-0.5 leading-[14px]"
        }
      >
        <svg className="mr-0.5 mt-0.5 shrink-0" width="18" height="18" viewBox="3 3 22 22">{children}</svg>
        <span className="text-[15px]">{label}</span>
      </span>
      <svg className="-ml-px shrink-0" width="13" height="21" viewBox="0 0 13 21"><path d="M0 0L13 21H0Z" fill={active ? "#fafafc" : "#d3d8ea"} /><path d="M0 0L13 21" stroke="#98a1b5" /></svg>
    </button>
  );
}

function ViewTab({ label, active }) {
  return (
    <button className={active ? "relative z-10 flex h-[23px]" : "flex h-[23px]"}>
      {active ? (
        <svg className="-ml-3" width="22" height="23" viewBox="0 0 22 23"><path d="M0 0H22V23H20Z" fill="#fff" /><path d="M0 0L20 23" stroke="#a4abbd" /></svg>
      ) : (
        <svg width="10" height="23" viewBox="0 0 10 23"><path d="M0 0H10V23H9L0 10Z" fill={label ? "#d0d6e9" : "#dfe2ea"} /><path d="M0 10L9 23" stroke="#a4abbd" /></svg>
      )}
      <span
        className={
          active
            ? "h-full rounded-br-md border-b border-r border-[#a4abbd] bg-white pl-[3px] pr-[9px] text-[16px] leading-6"
            : label
              ? "h-full rounded-br-md border-b border-r border-[#a4abbd] bg-[#d0d6e9] pl-[3px] pr-2 text-[16px] leading-6"
              : "flex h-full w-[31px] items-center rounded-br-md border-b border-r border-[#a4abbd] pl-2"
        }
      >
        {label || (
          <svg width="10" height="10" viewBox="0 0 10 10"><path d="M3.500.5h3v3h3v3h-3v3h-3v-3h-3v-3h3z" fill="none" stroke="#666" /></svg>
        )}
      </span>
    </button>
  );
}

const STATUS = [
  ["工作平面", "w-[87px]"], ["x 56.509", "w-[88px]"], ["y 21.093", "w-[88px]"], ["z 0.000", "w-[88px]"], ["毫米", "w-[88px]"],
  ["桌角", "w-[173px]", "swatch"], ["锁定格点", "w-[88px]"], ["正交", "w-[50px]"], ["平面模式", "w-[88px]"], ["物件锁点", "w-[88px]"],
  ["智慧轨迹", "w-[88px]", "on"], ["操作轴", "w-[69px]"], ["记录建构历史", "w-[126px]"], ["过滤器", "w-[69px]"],
];

export default function App() {
  return (
    <div className="flex min-h-screen flex-col bg-[#dfe2ea] font-['Noto_Sans','Noto_Sans_CJK_SC',sans-serif] text-black">
      <SharedDefs />
      <header className="relative flex h-7 items-center justify-between bg-white pl-[2px] pr-[4px]">
        <div className="absolute left-[1239px] top-0 h-[2px] w-[343px] bg-[#cfcfcf] shadow-[0_1px_3px_#b0b0b0]" />
        <h1 className="flex items-center gap-[5px] text-[16px] leading-5 text-[#999]">
          <svg width="20" height="20" viewBox="0 0 20 20"><rect width="20" height="20" fill="#111" /><path d="M0 4c3-3 7-3 9 1l-2 3-4 1zM9 9l8-8 2 3-4 6-6 2zM4 10l5 2 3 8H6z" fill="#eee" /><path d="M12 11l6-2-5 7z" fill="#999" /></svg>
          <span><span className="text-[15px]">椅子</span> (1464 KB) - Undefined (Undefined) (64-bit)</span>
        </h1>
        <div className="flex">
          <button aria-label="最小化" className="flex h-7 w-[58px] items-center justify-center"><svg width="12" height="12" viewBox="0 0 12 12"><path d="M0 5.500h12" stroke="#888" /></svg></button>
          <button aria-label="还原" className="flex h-7 w-[58px] items-center justify-center"><svg width="13" height="13" viewBox="0 0 13 13" fill="none" stroke="#888"><path d="M.5 2.500h9v10h-9zM2.500 2.500v-2h10v10h-3" /></svg></button>
          <button aria-label="关闭" className="flex h-7 w-[58px] items-center justify-center"><svg width="13" height="13" viewBox="0 0 13 13" stroke="#888"><path d="M.5.5l12 12M12.500.5l-12 12" /></svg></button>
        </div>
      </header>
      <nav className="flex h-6 items-center gap-4 bg-white pl-1.5 pt-0.5 text-[15px] leading-5 text-[#6b6b6b]">
        {MENUS.map((m) => <button key={m} className="whitespace-nowrap">{m}</button>)}
      </nav>

      <div className="border-t-2 border-[#f0f0f0] pb-[3px] pl-[3px] pr-[2px] pt-[3px] font-['Noto_Sans_CJK_SC',sans-serif]">
        <div className="flex">
          <div className="mr-px w-[3px] border-x border-[#b4bccb]" />
          <div className="flex-1">
            <div className="flex h-[29px] justify-between border-b border-[#98a3b5] bg-white">
              <p className="pl-[2px] text-[15px] leading-[18px]"><Mixed text="正在载入 Rhino 渲染，版本 1.50, Jan  3 2013, 03:30:28" /></p>
              <div className="flex w-5 flex-col items-center justify-around bg-[#f0f0f0]">
                <svg width="8" height="6" viewBox="0 0 8 6"><path d="M1 5l3-4 3 4" fill="none" stroke="#555" strokeWidth="1.800" /></svg>
                <svg width="8" height="6" viewBox="0 0 8 6"><path d="M1 1l3 4 3-4" fill="none" stroke="#555" strokeWidth="1.800" /></svg>
              </div>
            </div>
            <div className="flex h-[18px] bg-white">
              <label htmlFor="cmd" className="pl-[2px] text-[15px] font-bold leading-[14px]"><Mixed text="指令:" /></label>
              <input id="cmd" className="min-w-0 flex-1 bg-transparent pl-2 text-[15px] outline-none" />
              <div className="flex w-[18px] flex-col border border-t-0 border-[#9a9a9a] bg-[#e6e6e6]">
                <button aria-label="上一条" className="flex h-[9px] items-center justify-center border-b border-[#9a9a9a]"><svg width="8" height="5" viewBox="0 0 8 5"><path d="M0 4.500h8L4 .5z" /></svg></button>
                <button aria-label="下一条" className="flex h-2 items-center justify-center"><svg width="8" height="5" viewBox="0 0 8 5"><path d="M0 .5h8L4 4.500z" /></svg></button>
              </div>
            </div>
          </div>
        </div>
      </div>

      <div className="border-t border-[#b9c0cc] pt-1 font-['Noto_Sans_CJK_SC',sans-serif]">
        <div className="flex h-[21px] items-start justify-between border-b border-[#98a1b5] pl-[7px] pr-[2px]">
          <div className="flex">{TABS.map((t, i) => <ToolTab key={t} label={t} first={i === 0} />)}</div>
          <Gear className="mt-0.5" />
        </div>
        <div className="flex h-[38px] bg-linear-to-b from-[#f5f6f8] to-[#dfe2ea] pl-[3px] pt-px">
          <div className="mr-px h-8 w-[3px] border-x border-[#c4cad6]" />
          {BAR.map(([name, art, more], i) => (
            <button key={i} aria-label={name} className="h-7 w-7">
              <svg width="28" height="28" viewBox="0 0 28 28">
                {art}
                {more ? <path d="M27 21v6h-6z" fill="#555" /> : null}
              </svg>
            </button>
          ))}
        </div>
      </div>

      <main className="flex flex-1">
        <div className="w-16 shrink-0 pl-px pt-[3px]">
          <div className="mb-0.5 ml-0.5 h-[3px] w-[55px] border-y border-[#b4bccb]" />
          <div className="grid w-14 grid-cols-2">
            {SIDE.map(([name, art, more], i) => (
              <button key={i} aria-label={name} className="h-7 w-7">
                <svg width="28" height="28" viewBox="0 0 84 84">
                  {art}
                  {more ? <path d="M81 63V80H64Z" fill="#606060" /> : null}
                </svg>
              </button>
            ))}
          </div>
        </div>

        <div className="flex min-w-0 flex-1 flex-col">
          <div className="grid flex-1 grid-cols-2 grid-rows-2 gap-x-0.5 gap-y-[3px]">
            <Viewport title="Top"><TopScene /></Viewport>
            <Viewport title="Perspective" tone="grey"><PerspectiveScene /></Viewport>
            <Viewport title="Front" active><FrontScene /></Viewport>
            <Viewport title="Right"><RightScene /></Viewport>
          </div>
          <div className="flex h-[26px] pt-0.5">
            <ViewTab label="Top" />
            <ViewTab label="Perspective" />
            <ViewTab label="Front" active />
            <ViewTab label="Right" />
            <ViewTab />
          </div>
        </div>

        <aside className="ml-2 flex w-48 shrink-0 flex-col pb-0.5 pt-[3px] font-['Noto_Sans_CJK_SC',sans-serif]">
          <div className="mb-[3px] h-[3px] border-y border-[#b4bccb]" />
          <div className="relative flex h-[21px] border-b border-[#98a1b5]">
            <PanelTab label="属" active><ColorWheel cx={14} cy={14} r={7.3} /></PanelTab>
            <PanelTab label="图">{LayersShape}</PanelTab>
            <PanelTab label="显"><g stroke="#111"><path d="M5 5h18v15H5z" fill="#333" /><path d="M7 7h14v11H7z" fill="#c4c8c4" /><path d="M11 21h6l1 3h-8z" fill="#333" /></g></PanelTab>
            <PanelTab label="说"><g><path d="M5 4h18v20H5z" fill="#e8ecf8" stroke="#555" /><path d="M5 4h18v4H5z" fill="#3457d0" /><circle cx="14" cy="15.500" r="7" fill="#3457d0" /><text x="14" y="20.500" textAnchor="middle" fill="#fff" fontFamily="Liberation Serif, serif" fontWeight="bold" fontSize="14">?</text></g></PanelTab>
            <Gear className="ml-auto mr-0.5 mt-1.5" />
          </div>
          <div className="flex flex-1 flex-col justify-between border-x border-b border-[#98a1b5] bg-[#f7f7fa] pl-0.5 pt-[7px]">
            <Properties />
            <div className="mb-2 ml-[56px] flex w-[97px] justify-center gap-0.5 rounded-lg bg-white/60 py-1 shadow-[0_0_6px_#e4e4e4]">
              <div className="text-center">
                <p className="text-[21px] font-bold leading-[25px] text-[#222]">学犀牛</p>
                <p className="font-['Liberation_Sans',sans-serif] text-[10px] font-bold leading-[10px] text-[#333]">xuexiniu.com</p>
              </div>
              <p className="flex h-[34px] w-[19px] flex-col items-center justify-center rounded-xs bg-[#c8282c] text-[9px] leading-[10px] text-white"><span>中</span><span>文</span><span>网</span></p>
            </div>
          </div>
        </aside>
      </main>

      <footer className="flex h-[22px] border-t border-[#98a1b5] font-['Noto_Sans_CJK_SC',sans-serif] text-[15px] leading-[18px]">
        {STATUS.map(([text, w, kind]) => (
          <div key={text} className={w + " shrink-0 border-r border-[#a4abbd]"}>
            {kind === "swatch" ? (
              <span className="flex gap-0.5 pl-[3px]"><span className="mt-1 h-4 w-4 bg-black" /><span>{text}</span></span>
            ) : (
              <button className={kind === "on" ? "block h-full w-full bg-[#e2f3fd] pb-0.5 font-bold" : "block h-full w-full pb-0.5"}><Mixed text={text} /></button>
            )}
          </div>
        ))}
        <span className="pl-[2px]"><Mixed text="CPU 使用量: 0.0 %" /></span>
      </footer>
    </div>
  );
}
